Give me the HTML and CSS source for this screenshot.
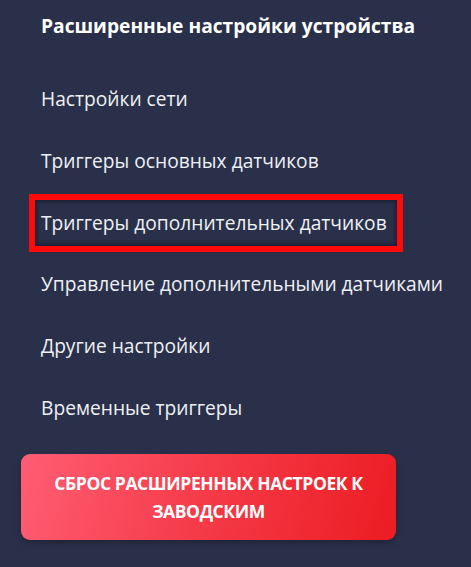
FILE: index.html
```html
<!DOCTYPE html>
<html lang="ru">
<head>
<meta charset="utf-8">
<link rel="stylesheet" href="styles.css">
</head>
<body>
<div class="panel">
  <div class="title">Расширенные настройки устройства</div>
  <nav class="menu">
    <a class="item">Настройки сети</a>
    <a class="item">Триггеры основных датчиков</a>
    <a class="item active">Триггеры дополнительных датчиков</a>
    <a class="item">Управление дополнительными датчиками</a>
    <a class="item">Другие настройки</a>
    <a class="item">Временные триггеры</a>
  </nav>
  <button class="reset">Сброс расширенных настроек к заводским</button>
</div>
</body>
</html>
```
FILE: styles.css
```css
html, body {
  margin: 0;
  padding: 0;
  background: #2a304a;
  height: 100%;
}
body {
  font-family: "Open Sans", "Noto Sans", sans-serif;
  color: #f2f3f6;
}
.panel {
  display: flex;
  flex-direction: column;
  align-items: flex-start;
  padding: 13px 0 0 0;
}
.title {
  font-weight: 700;
  font-size: 19.2px;
  line-height: 26px;
  margin-left: 41px;
  color: #ffffff;
}
.menu {
  display: flex;
  flex-direction: column;
  align-items: flex-start;
  gap: 15.8px;
  margin-top: 37px;
  margin-left: 35px;
}
.item {
  display: block;
  font-size: 19.2px;
  line-height: 24px;
  padding: 11px 10px 11px 6px;
  color: #eef0f4;
}
.item.active {
  outline: 6px solid #ff0a0a;
  box-shadow: inset 0 0 4px 1px rgba(10, 12, 25, 0.6);
}
.reset {
  margin: 23px 0 0 21px;
  width: 375px;
  height: 86px;
  border: none;
  border-radius: 9px;
  background: linear-gradient(105deg, #ff5d73 0%, #f53a48 50%, #ec1c22 100%);
  box-shadow: 0 3px 6px rgba(0, 0, 0, 0.25);
  color: #ffffff;
  font-family: "Open Sans", "Noto Sans", sans-serif;
  font-weight: 700;
  font-size: 17.5px;
  line-height: 28px;
  text-transform: uppercase;
  letter-spacing: -0.4px;
  padding: 0 28px;
}
```
